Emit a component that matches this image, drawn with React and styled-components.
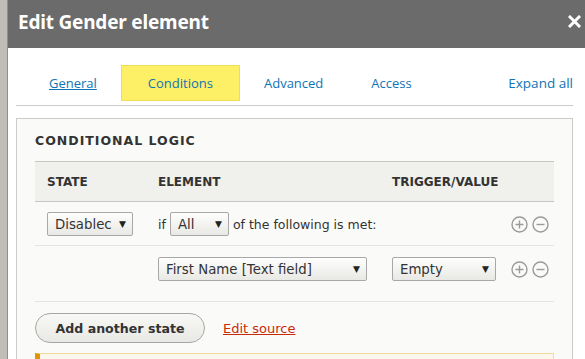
import styled, { createGlobalStyle } from "styled-components";

const GlobalStyle = createGlobalStyle`
  html, body {
    margin: 0;
    padding: 0;
    background: #bebeb7;
    font-family: "DejaVu Sans", Verdana, sans-serif;
    overflow: hidden;
  }
`;

const PlusIcon = () => (
  <svg width="17" height="17" viewBox="0 0 17 17">
    <circle cx="8.5" cy="8.5" r="7.5" fill="none" stroke="#9a9a9a" strokeWidth="1.4" />
    <path d="M8.5 4.5v8M4.5 8.5h8" stroke="#9a9a9a" strokeWidth="1.4" />
  </svg>
);

const MinusIcon = () => (
  <svg width="17" height="17" viewBox="0 0 17 17">
    <circle cx="8.5" cy="8.5" r="7.5" fill="none" stroke="#9a9a9a" strokeWidth="1.4" />
    <path d="M4.5 8.5h8" stroke="#9a9a9a" strokeWidth="1.4" />
  </svg>
);

const CloseIcon = () => (
  <svg width="13" height="13" viewBox="0 0 13 13">
    <path d="M2 2l9 9M11 2l-9 9" stroke="#fff" strokeWidth="3" strokeLinecap="square" />
  </svg>
);

const Select = ({ value, width }) => (
  <SelectBox style={{ width }}>
    <SelectText>{value}</SelectText>
    <Arrow>▼</Arrow>
  </SelectBox>
);

const App = () => {
  return (
    <>
      <GlobalStyle />
      <Dialog>
        <Header>
          <Title>Edit Gender element</Title>
          <CloseIcon />
        </Header>
        <Body>
          <Tabs>
            <Tab underline>General</Tab>
            <Tab active>Conditions</Tab>
            <Tab>Advanced</Tab>
            <Tab>Access</Tab>
            <ExpandAll>Expand all</ExpandAll>
          </Tabs>
          <Fieldset>
            <Legend>Conditional logic</Legend>
            <Table>
              <HeadRow>
                <HeadCell>State</HeadCell>
                <HeadCell>Element</HeadCell>
                <HeadCell>Trigger/Value</HeadCell>
                <HeadCell />
              </HeadRow>
              <Row>
                <Cell>
                  <Select value="Disablec" width={86} />
                </Cell>
                <Cell span>
                  <Inline>
                    if <Select value="All" width={59} /> of the following is met:
                  </Inline>
                </Cell>
                <Cell>
                  <Icons>
                    <PlusIcon />
                    <MinusIcon />
                  </Icons>
                </Cell>
              </Row>
              <Row tall>
                <Cell />
                <Cell>
                  <Select value="First Name [Text field]" width={209} />
                </Cell>
                <Cell>
                  <Select value="Empty" width={104} />
                </Cell>
                <Cell>
                  <Icons>
                    <PlusIcon />
                    <MinusIcon />
                  </Icons>
                </Cell>
              </Row>
            </Table>
            <Actions>
              <Button>Add another state</Button>
              <SourceLink>Edit source</SourceLink>
            </Actions>
            <Message />
          </Fieldset>
        </Body>
      </Dialog>
    </>
  );
};

export default App;

const Dialog = styled.div`
  margin-left: 7px;
  border-left: 1px solid #8e8e8a;
  height: 359px;
  background: #fff;
`;

const Header = styled.div`
  box-sizing: border-box;
  height: 48px;
  background: #6b6b6b;
  display: flex;
  align-items: center;
  justify-content: space-between;
  padding: 0 4px 5px 10px;
`;

const Title = styled.h1`
  margin: 0;
  color: #fff;
  font-family: "Noto Sans", sans-serif;
  font-size: 19px;
  font-weight: bold;
  letter-spacing: -0.2px;
`;

const Body = styled.div`
  padding: 0 12px 0 8px;
`;

const Tabs = styled.div`
  display: flex;
  align-items: flex-end;
  height: 53px;
  padding: 0 0 4px 9px;
  border-bottom: 1px solid #cacaca;
  font-family: "Open Sans", sans-serif;
  font-size: 13px;
`;

const Tab = styled.span`
  color: #0f74b5;
  padding: 0 ${(p) => (p.active ? "26px" : "23px")};
  height: 34px;
  display: flex;
  align-items: center;
  text-decoration: ${(p) => (p.underline ? "underline" : "none")};
  background: ${(p) => (p.active ? "#fdef66" : "transparent")};
  border: 1px solid ${(p) => (p.active ? "#eedd55" : "transparent")};
`;

const ExpandAll = styled.span`
  margin-left: auto;
  height: 36px;
  display: flex;
  align-items: center;
  font-size: 13.5px;
  color: #0f74b5;
`;

const Fieldset = styled.div`
  margin-top: 12px;
  border: 1px solid #cbcbc8;
  border-bottom: none;
  background: #fafaf8;
  padding: 0 18px;
  height: 260px;
`;

const Legend = styled.div`
  height: 42px;
  display: flex;
  align-items: center;
  text-transform: uppercase;
  font-weight: bold;
  font-size: 12.5px;
  letter-spacing: 1px;
  color: #333;
`;

const Table = styled.div`
  display: grid;
  grid-template-columns: 123px 234px 119px 1fr;
`;

const HeadRow = styled.div`
  display: contents;
  & > div {
    height: 39px;
    background: #f0f0ec;
    border-top: 1px solid #c6c6c2;
    border-bottom: 1px solid #c6c6c2;
  }
  & > div:first-child {
    padding-left: 12px;
  }
`;

const HeadCell = styled.div`
  display: flex;
  align-items: center;
  text-transform: uppercase;
  font-weight: bold;
  font-size: 12px;
  color: #333;
`;

const Row = styled.div`
  display: contents;
  & > div {
    padding: ${(p) => (p.tall ? "11px 0 20px" : "10px 0 9px")};
    border-bottom: 1px solid #e3e3e0;
  }
  & > div:first-child {
    padding-left: 12px;
  }
`;

const Cell = styled.div`
  display: flex;
  align-items: center;
  grid-column: ${(p) => (p.span ? "span 2" : "auto")};
  font-size: 12.5px;
  color: #333;
`;

const Inline = styled.div`
  display: flex;
  align-items: center;
  gap: 4px;
`;

const SelectBox = styled.div`
  box-sizing: border-box;
  height: 24px;
  display: flex;
  align-items: center;
  justify-content: space-between;
  padding: 0 6px 0 7px;
  border: 1px solid #a8a8a8;
  border-radius: 2px;
  background: linear-gradient(#fefefe, #e8e8e4);
  font-size: 13.3px;
  color: #333;
  overflow: hidden;
`;

const SelectText = styled.span`
  white-space: nowrap;
  overflow: hidden;
`;

const Arrow = styled.span`
  font-size: 9px;
  color: #222;
  margin-left: 4px;
`;

const Icons = styled.div`
  display: flex;
  gap: 4px;
`;

const Actions = styled.div`
  display: flex;
  align-items: center;
  gap: 18px;
  margin-top: 11px;
`;

const Button = styled.button`
  height: 30px;
  width: 170px;
  border: 1px solid #a6a6a6;
  border-radius: 15px;
  background: linear-gradient(#f8f8f6, #e8e8e4);
  font-family: "DejaVu Sans", sans-serif;
  font-size: 12.6px;
  font-weight: bold;
  color: #333;
`;

const SourceLink = styled.a`
  color: #c92a0a;
  text-decoration: underline;
  font-size: 13px;
`;

const Message = styled.div`
  margin-top: 10px;
  height: 30px;
  border: 1px solid #f4d99b;
  border-left: 5px solid #e09600;
  background: #fdf8ed;
`;
